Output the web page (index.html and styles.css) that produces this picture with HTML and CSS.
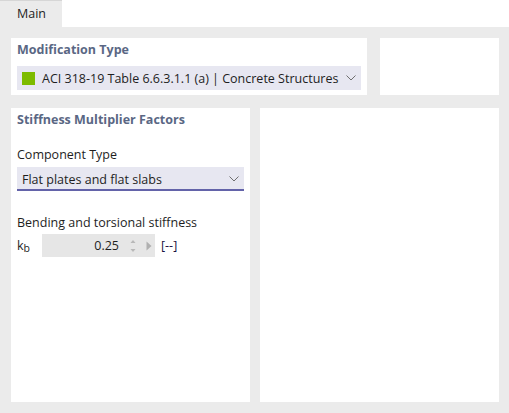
FILE: index.html
```html
<!DOCTYPE html>
<html>
<head>
<meta charset="utf-8">
<link rel="stylesheet" href="styles.css">
</head>
<body>
<div class="tabbar">
  <div class="tab">Main</div>
</div>
<div class="content">
  <div class="row-top">
    <div class="panel panel-mod">
      <div class="title">Modification Type</div>
      <div class="combo combo-mod">
        <span class="swatch"></span>
        <span class="combo-text">ACI 318-19 Table 6.6.3.1.1 (a) | Concrete Structures</span>
        <svg class="chev" width="10" height="6" viewBox="0 0 10 6"><path d="M0.5 0.5 L5 5 L9.5 0.5" fill="none" stroke="#6f6f6f" stroke-width="1"/></svg>
      </div>
    </div>
    <div class="panel panel-side"></div>
  </div>
  <div class="row-bottom">
    <div class="panel panel-stiff">
      <div class="title">Stiffness Multiplier Factors</div>
      <div class="label label-comp">Component Type</div>
      <div class="combo combo-comp">
        <span class="combo-text">Flat plates and flat slabs</span>
        <svg class="chev" width="10" height="6" viewBox="0 0 10 6"><path d="M0.5 0.5 L5 5 L9.5 0.5" fill="none" stroke="#6f6f6f" stroke-width="1"/></svg>
      </div>
      <div class="label label-bend">Bending and torsional stiffness</div>
      <div class="field-row">
        <span class="sym">k<sub>b</sub></span>
        <div class="spin">
          <span class="spin-val">0.25</span>
          <svg class="spin-arrows" width="6" height="16" viewBox="0 0 6 16"><path d="M3 2 L5.5 5 L0.5 5 Z" fill="#b8b8b8"/><path d="M0.5 11 L5.5 11 L3 14 Z" fill="#b8b8b8"/></svg>
          <svg class="spin-play" width="6" height="10" viewBox="0 0 6 10"><path d="M0.5 0.5 L5.5 5 L0.5 9.5 Z" fill="#b0b0b0"/></svg>
        </div>
        <span class="unit">[--]</span>
      </div>
    </div>
    <div class="panel panel-view"></div>
  </div>
</div>
</body>
</html>
```
FILE: styles.css
```css
html, body {
  margin: 0;
  padding: 0;
  background: #ffffff;
}
body {
  width: 509px;
  height: 413px;
  overflow: hidden;
  font-family: "Open Sans", "Noto Sans", sans-serif;
  font-size: 12.5px;
  color: #1e1e1e;
}
.tabbar {
  height: 27px;
  display: flex;
  background: #ffffff;
}
.tab {
  width: 62px;
  height: 27px;
  border-top: 1px solid #d6d6d6;
  background: #ebebeb;
  line-height: 26px;
  padding-left: 17px;
  box-sizing: border-box;
  font-size: 12.5px;
}
.content {
  background: #ebebeb;
  height: 386px;
  box-sizing: border-box;
  padding: 11px 10px 11px 11px;
  display: flex;
  flex-direction: column;
  gap: 13px;
}
.row-top {
  display: flex;
  gap: 13px;
  height: 57px;
}
.row-bottom {
  display: flex;
  gap: 10px;
  height: 294px;
}
.panel {
  background: #ffffff;
  box-sizing: border-box;
}
.panel-mod {
  width: 356px;
  padding: 3px 6px 0 6px;
}
.panel-side {
  width: 119px;
}
.panel-stiff {
  width: 239px;
  padding: 3px 6px 0 6px;
}
.panel-view {
  width: 239px;
}
.title {
  font-weight: 700;
  color: #5a6784;
  font-size: 12.5px;
  line-height: 18px;
}
.combo {
  display: flex;
  align-items: center;
  height: 24px;
  background: #e7e7f1;
  box-sizing: border-box;
  padding: 0 5px 0 5px;
}
.combo-mod {
  margin-top: 7px;
}
.swatch {
  width: 13px;
  height: 13px;
  background: #7dbb00;
  margin-right: 7px;
}
.combo-text {
  flex: 1;
  white-space: nowrap;
}
.chev {
  display: block;
}
.label {
  line-height: 18px;
}
.label-comp {
  margin-top: 17px;
}
.combo-comp {
  margin-top: 3px;
  border-bottom: 2px solid #6363a9;
  padding-top: 2px;
}
.label-bend {
  margin-top: 23px;
}
.field-row {
  display: flex;
  align-items: center;
  margin-top: 2px;
  height: 23px;
}
.sym {
  width: 25px;
  font-size: 12.5px;
}
.sym sub {
  font-size: 10.5px;
  vertical-align: -2px;
}
.spin {
  width: 113px;
  height: 23px;
  background: #e6e6e6;
  display: flex;
  align-items: center;
  box-sizing: border-box;
  padding-right: 3px;
}
.spin-val {
  flex: 1;
  text-align: right;
  padding-right: 11px;
}
.spin-arrows {
  display: block;
  margin-right: 10px;
}
.spin-play {
  display: block;
}
.unit {
  margin-left: 6px;
  color: #1a1040;
}
```
